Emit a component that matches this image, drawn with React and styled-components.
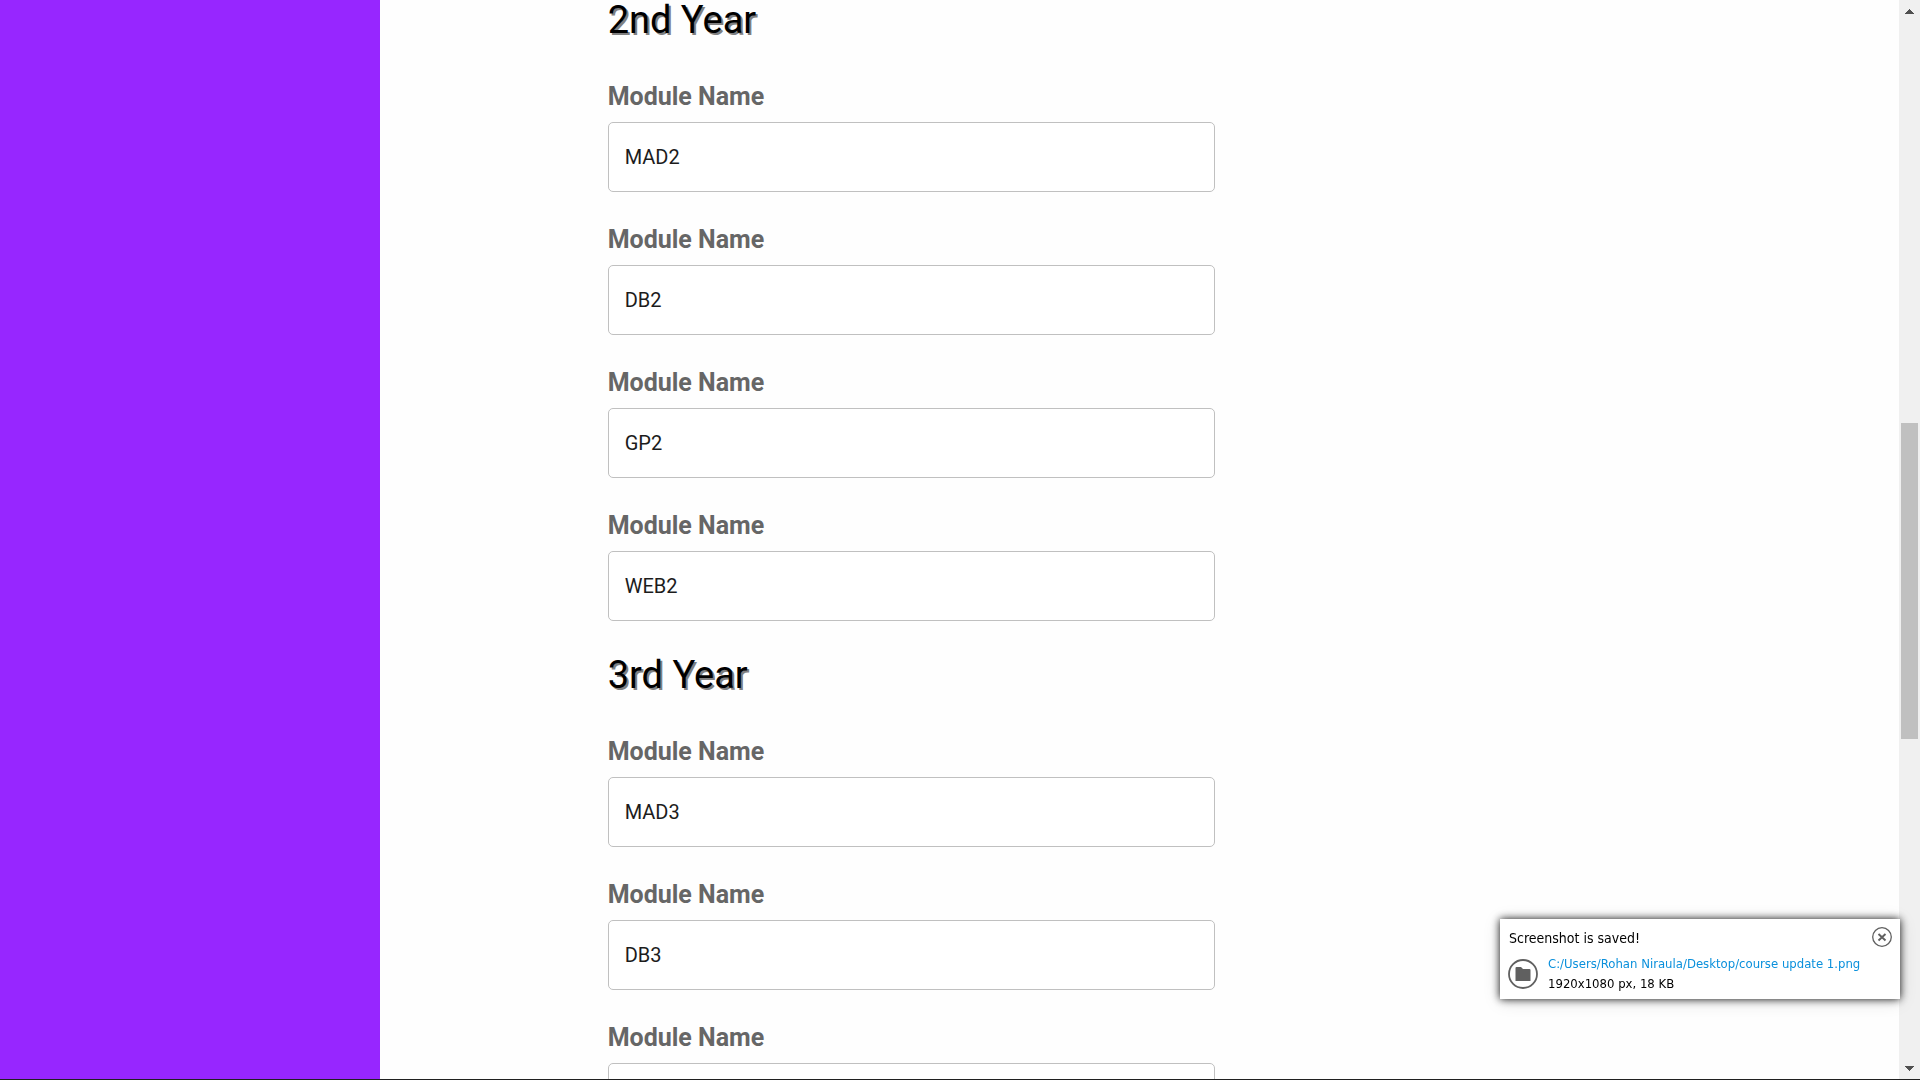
import React from "react";
import styled, { createGlobalStyle } from "styled-components";

const GlobalStyle = createGlobalStyle`
  * { box-sizing: border-box; }
  body {
    margin: 0;
    background: #fefefe;
    font-family: Roboto, "Liberation Sans", sans-serif;
    overflow: hidden;
  }
`;

const Page = styled.div`
  display: flex;
  height: 100vh;
  border-bottom: 1px solid #202020;
`;

const Viewport = styled.div`
  flex: 1;
  display: flex;
  min-width: 0;
`;

const Sidebar = styled.aside`
  width: 20%;
  background: #9726ff;
`;

const Content = styled.main`
  flex: 1;
  overflow: hidden;
  padding-left: 12%;
`;

const ModuleForm = styled.form`
  width: 47%;
  display: flex;
  flex-direction: column;
  gap: 34px;
`;

const YearSection = styled.section`
  display: flex;
  flex-direction: column;
  gap: 34px;
`;

const YearTitle = styled.h2`
  margin: 0 0 9px;
  font-size: 38px;
  font-weight: 400;
  line-height: 40px;
  color: #000;
  text-shadow: 2px 2px #808080;
`;

const Field = styled.div`
  display: flex;
  flex-direction: column;
  gap: 11px;
`;

const Label = styled.label`
  font-size: 25px;
  font-weight: 700;
  line-height: 28px;
  color: #666;
`;

const TextBox = styled.input`
  width: 100%;
  height: 70px;
  padding: 0 16px;
  border: 1px solid #c0c0c0;
  border-radius: 5px;
  background: #fff;
  font-family: inherit;
  font-size: 20px;
  color: #1c1c1c;
  outline: none;
`;

const ScrollTrack = styled.div`
  width: 21px;
  display: flex;
  flex-direction: column;
  align-items: center;
  background: #f0f0f0;
`;

const ScrollButton = styled.button`
  width: 21px;
  height: 22px;
  padding: 0;
  border: 0;
  background: none;
  display: grid;
  place-items: center;
  color: #505050;
`;

const ScrollRail = styled.div`
  flex: 1;
  display: flex;
  flex-direction: column;
`;

const ScrollSpace = styled.div`
  flex: ${(p) => p.$share};
`;

const ScrollThumb = styled.div`
  width: 17px;
  flex: 316;
  background: #c0c0c0;
`;

const Toast = styled.div`
  position: fixed;
  right: 20px;
  bottom: 81px;
  width: 400px;
  height: 80px;
  padding: 8px;
  background: #fff;
  box-shadow: 0 0 8px rgba(0, 0, 0, 0.9), 0 2px 16px rgba(0, 0, 0, 0.15);
  font-family: "DejaVu Sans Condensed", "DejaVu Sans", sans-serif;
  font-stretch: condensed;
  color: #000;
`;

const ToastHeader = styled.div`
  display: flex;
  justify-content: space-between;
  padding-left: 1px;
  font-size: 14px;
  line-height: 22px;
`;

const IconButton = styled.button`
  width: ${(p) => p.$size}px;
  height: ${(p) => p.$size}px;
  padding: 0;
  border: 0;
  background: none;
  color: #606060;
  svg { display: block; }
`;

const ToastBody = styled.div`
  display: flex;
  align-items: center;
  gap: 10px;
  margin-top: 5px;
  font-size: 13px;
  line-height: 20px;
  white-space: nowrap;
`;

const FileLink = styled.a`
  display: block;
  color: #0a90dc;
  text-decoration: none;
`;

const years = [
  { title: "2nd Year", modules: ["MAD2", "DB2", "GP2", "WEB2"] },
  { title: "3rd Year", modules: ["MAD3", "DB3", "GP3", "WEB3"] },
];

function Arrow({ up }) {
  return (
    <svg width="9" height="5" viewBox="0 0 9 5" shapeRendering="crispEdges">
      <path d={up ? "M0 5 4.500 0 9 5z" : "M0 0h9L4.500 5z"} fill="currentColor" />
    </svg>
  );
}

function ModuleField({ id, value }) {
  return (
    <Field>
      <Label htmlFor={id}>Module Name</Label>
      <TextBox id={id} type="text" defaultValue={value} />
    </Field>
  );
}

function SavedToast() {
  return (
    <Toast role="status">
      <ToastHeader>
        <span>Screenshot is saved!</span>
        <IconButton $size={20} aria-label="Close">
          <svg width="20" height="20" viewBox="0 0 20 20" fill="none" stroke="currentColor">
            <circle cx="10" cy="10" r="9.300" strokeWidth="1.300" />
            <path d="M6.500 7 13.500 13.500M13.500 7 6.500 13.500" strokeWidth="1.900" />
          </svg>
        </IconButton>
      </ToastHeader>
      <ToastBody>
        <IconButton $size={30} aria-label="Open folder">
          <svg width="30" height="30" viewBox="0 0 30 30">
            <circle cx="15" cy="15" r="14" fill="none" stroke="currentColor" strokeWidth="1.800" />
            <path d="M7.500 22V9q0-1 1-1H13l2 2h6.500q1 0 1 1v11z" fill="currentColor" />
          </svg>
        </IconButton>
        <div>
          <FileLink href="#file">C:/Users/Rohan Niraula/Desktop/course update 1.png</FileLink>
          <span>1920x1080 px, 18 KB</span>
        </div>
      </ToastBody>
    </Toast>
  );
}

export default function App() {
  return (
    <>
      <GlobalStyle />
      <Page>
        <Viewport>
          <Sidebar />
          <Content>
            <ModuleForm>
              {years.map((year) => (
                <YearSection key={year.title}>
                  <YearTitle>{year.title}</YearTitle>
                  {year.modules.map((name) => (
                    <ModuleField key={name} id={name} value={name} />
                  ))}
                </YearSection>
              ))}
            </ModuleForm>
          </Content>
        </Viewport>
        <ScrollTrack>
          <ScrollButton aria-label="Scroll up"><Arrow up /></ScrollButton>
          <ScrollRail>
            <ScrollSpace $share={401} />
            <ScrollThumb />
            <ScrollSpace $share={318} />
          </ScrollRail>
          <ScrollButton aria-label="Scroll down"><Arrow /></ScrollButton>
        </ScrollTrack>
      </Page>
      <SavedToast />
    </>
  );
}
